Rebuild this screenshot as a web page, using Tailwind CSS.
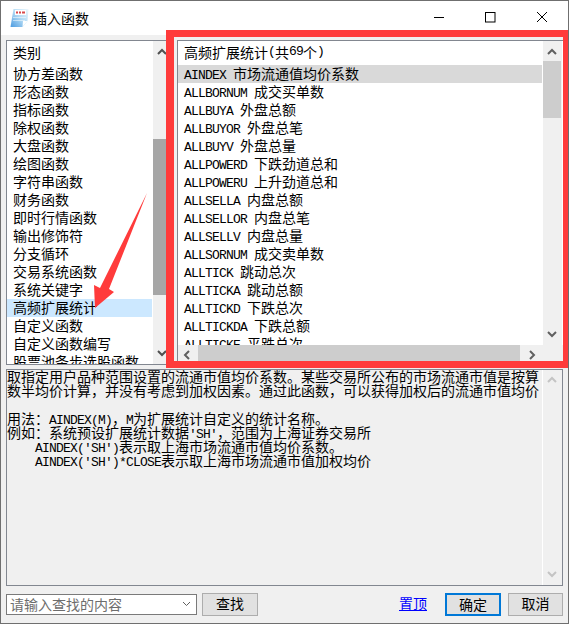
<!DOCTYPE html>
<html lang="zh">
<head>
<meta charset="utf-8">
<script src="https://cdn.jsdelivr.net/npm/@tailwindcss/browser@4"></script>
</head>
<body class="m-0">
<div class="relative w-[569px] h-[624px] overflow-hidden bg-[#f0f0f0] border border-[#6f6f6f] font-['Noto_Sans_CJK_SC','Liberation_Sans',sans-serif] text-[14px] leading-[18px] text-black">
  <!-- title bar -->
  <header class="h-[34px] bg-white flex items-center pl-[9px]">
    <svg class="w-[19px] h-[20px]" viewBox="0 0 19 20">
      <defs><linearGradient id="pg" x1="0" y1="1" x2="1" y2="0"><stop offset="0" stop-color="#4c9be0"/><stop offset="0.55" stop-color="#b5dcf5"/><stop offset="1" stop-color="#eef8fd"/></linearGradient></defs>
      <path d="M3.500 1H18.500L17.500 13L12.500 19H0.500Z" fill="url(#pg)"/>
      <rect x="5" y="2" width="11" height="5" fill="#fff"/>
      <path d="M6 4.500h2M9 4.500h2M12 4.500h3" stroke="#d8494b" stroke-width="2"/>
      <path d="M3 9.500H16M3 12.500H15" stroke="#fff" stroke-opacity="0.5"/>
      <path d="M12.500 19L17.500 13H13Z" fill="#fff"/>
    </svg>
    <h1 class="ml-[4px] text-[14px] font-normal">插入函数</h1>
    <div class="ml-auto flex items-center h-full">
      <svg class="w-[52px] h-[34px]" viewBox="0 0 52 34"><path d="M22 16.500h10" stroke="#000" fill="none"/></svg>
      <svg class="w-[52px] h-[34px]" viewBox="0 0 52 34"><rect x="21.500" y="11.500" width="9.500" height="9.500" stroke="#000" fill="none"/></svg>
      <svg class="w-[52px] h-[34px]" viewBox="0 0 52 34"><path d="M21 11l10 10M31 11l-10 10" stroke="#000" fill="none"/></svg>
    </div>
  </header>

  <main class="flex flex-col px-[5px]">
    <div class="flex gap-[6px] pt-[5px] h-[331px]">
      <!-- category list -->
      <section class="relative w-[165px] h-[325px] shrink-0 bg-white border border-[#828790] flex overflow-hidden">
        <div class="w-[145px] shrink-0">
          <div class="h-[22px] mb-[2px] pl-[6px] flex items-center">类别</div>
          <ul class="leading-[16px]">
            <li class="h-[18px] pl-[6px]">协方差函数</li>
            <li class="h-[18px] pl-[6px]">形态函数</li>
            <li class="h-[18px] pl-[6px]">指标函数</li>
            <li class="h-[18px] pl-[6px]">除权函数</li>
            <li class="h-[18px] pl-[6px]">大盘函数</li>
            <li class="h-[18px] pl-[6px]">绘图函数</li>
            <li class="h-[18px] pl-[6px]">字符串函数</li>
            <li class="h-[18px] pl-[6px]">财务函数</li>
            <li class="h-[18px] pl-[6px]">即时行情函数</li>
            <li class="h-[18px] pl-[6px]">输出修饰符</li>
            <li class="h-[18px] pl-[6px]">分支循环</li>
            <li class="h-[18px] pl-[6px]">交易系统函数</li>
            <li class="h-[18px] pl-[6px]">系统关键字</li>
            <li class="h-[18px] pl-[6px] bg-[#cce8ff]">高频扩展统计</li>
            <li class="h-[18px] pl-[6px]">自定义函数</li>
            <li class="h-[18px] pl-[6px]">自定义函数编写</li>
            <li class="h-[18px] pl-[6px] whitespace-nowrap">股票池条步选股函数</li>
          </ul>
        </div>
        <div class="relative w-[18px] ml-[1px] h-full bg-[#f0f0f0]">
          <svg class="absolute left-[3px] top-[7px] w-[12px] h-[8px]" viewBox="0 0 12 8"><path d="M2 6l4-4 4 4" stroke="#505050" stroke-width="2" fill="none"/></svg>
          <div class="absolute left-0 top-[98px] w-full h-[156px] bg-[#a6a6a6]"></div>
          <svg class="absolute left-[3px] bottom-[7px] w-[12px] h-[8px]" viewBox="0 0 12 8"><path d="M2 2l4 4 4-4" stroke="#505050" stroke-width="2" fill="none"/></svg>
        </div>
      </section>

      <!-- function list -->
      <section class="relative w-[387px] h-[322px] shrink-0 bg-white border border-[#828790] flex flex-col overflow-hidden">
        <div class="flex h-[304px]">
          <div class="w-[365px] shrink-0 overflow-hidden">
            <div class="h-[22px] mb-[2px] pl-[6px] flex items-center whitespace-pre">高频扩展统计<span class="font-['Liberation_Mono'] text-[13px] tracking-[-0.8px]">(</span>共<span class="font-['Liberation_Mono'] text-[13px] tracking-[-0.8px]">69</span>个<span class="font-['Liberation_Mono'] text-[13px] tracking-[-0.8px]">)</span></div>
            <ul class="w-[364px] whitespace-nowrap leading-[16px]">
              <li class="h-[18px] pl-[6px] bg-[#d9d9d9]"><span class="font-['Liberation_Mono'] text-[13px] tracking-[-0.8px]">AINDEX </span>市场流通值均价系数</li>
              <li class="h-[18px] pl-[6px]"><span class="font-['Liberation_Mono'] text-[13px] tracking-[-0.8px]">ALLBORNUM </span>成交买单数</li>
              <li class="h-[18px] pl-[6px]"><span class="font-['Liberation_Mono'] text-[13px] tracking-[-0.8px]">ALLBUYA </span>外盘总额</li>
              <li class="h-[18px] pl-[6px]"><span class="font-['Liberation_Mono'] text-[13px] tracking-[-0.8px]">ALLBUYOR </span>外盘总笔</li>
              <li class="h-[18px] pl-[6px]"><span class="font-['Liberation_Mono'] text-[13px] tracking-[-0.8px]">ALLBUYV </span>外盘总量</li>
              <li class="h-[18px] pl-[6px]"><span class="font-['Liberation_Mono'] text-[13px] tracking-[-0.8px]">ALLPOWERD </span>下跌劲道总和</li>
              <li class="h-[18px] pl-[6px]"><span class="font-['Liberation_Mono'] text-[13px] tracking-[-0.8px]">ALLPOWERU </span>上升劲道总和</li>
              <li class="h-[18px] pl-[6px]"><span class="font-['Liberation_Mono'] text-[13px] tracking-[-0.8px]">ALLSELLA </span>内盘总额</li>
              <li class="h-[18px] pl-[6px]"><span class="font-['Liberation_Mono'] text-[13px] tracking-[-0.8px]">ALLSELLOR </span>内盘总笔</li>
              <li class="h-[18px] pl-[6px]"><span class="font-['Liberation_Mono'] text-[13px] tracking-[-0.8px]">ALLSELLV </span>内盘总量</li>
              <li class="h-[18px] pl-[6px]"><span class="font-['Liberation_Mono'] text-[13px] tracking-[-0.8px]">ALLSORNUM </span>成交卖单数</li>
              <li class="h-[18px] pl-[6px]"><span class="font-['Liberation_Mono'] text-[13px] tracking-[-0.8px]">ALLTICK </span>跳动总次</li>
              <li class="h-[18px] pl-[6px]"><span class="font-['Liberation_Mono'] text-[13px] tracking-[-0.8px]">ALLTICKA </span>跳动总额</li>
              <li class="h-[18px] pl-[6px]"><span class="font-['Liberation_Mono'] text-[13px] tracking-[-0.8px]">ALLTICKD </span>下跌总次</li>
              <li class="h-[18px] pl-[6px]"><span class="font-['Liberation_Mono'] text-[13px] tracking-[-0.8px]">ALLTICKDA </span>下跌总额</li>
              <li class="h-[18px] pl-[6px]"><span class="font-['Liberation_Mono'] text-[13px] tracking-[-0.8px]">ALLTICKE </span>平跌总次</li>
            </ul>
          </div>
          <div class="relative w-[19px] h-full bg-[#f0f0f0]">
            <svg class="absolute left-[3px] top-[7px] w-[12px] h-[8px]" viewBox="0 0 12 8"><path d="M2 6l4-4 4 4" stroke="#606060" stroke-width="2" fill="none"/></svg>
            <div class="absolute left-0 top-[20px] w-[18px] h-[57px] bg-[#cdcdcd]"></div>
            <svg class="absolute left-[3px] bottom-[7px] w-[12px] h-[8px]" viewBox="0 0 12 8"><path d="M2 2l4 4 4-4" stroke="#606060" stroke-width="2" fill="none"/></svg>
          </div>
        </div>
        <div class="relative flex-1 bg-[#f0f0f0]">
          <svg class="absolute left-[5px] top-[4px] w-[8px] h-[12px]" viewBox="0 0 8 12"><path d="M6 2l-4 4 4 4" stroke="#606060" stroke-width="2" fill="none"/></svg>
          <div class="absolute left-[20px] top-0 w-[322px] h-full bg-[#cdcdcd]"></div>
          <svg class="absolute left-[350px] top-[4px] w-[8px] h-[12px]" viewBox="0 0 8 12"><path d="M2 2l4 4-4 4" stroke="#606060" stroke-width="2" fill="none"/></svg>
        </div>
      </section>
    </div>

    <!-- description -->
    <section class="flex h-[217px] border border-[#828790] mt-[3px]">
      <div class="w-[535px] shrink-0 overflow-hidden whitespace-nowrap leading-[14px] -mt-[1px]">
        <p class="h-[14px]">取指定用户品种范围设置的流通市值均价系数。某些交易所公布的市场流通市值是按算</p>
        <p class="h-[14px]">数半均价计算，并没有考虑到加权因素。通过此函数，可以获得加权后的流通市值均价</p>
        <p class="h-[14px]"></p>
        <p class="h-[14px]">用法：<span class="font-['Liberation_Mono'] text-[13px] tracking-[-0.8px]">AINDEX(M)</span>，<span class="font-['Liberation_Mono'] text-[13px] tracking-[-0.8px]">M</span>为扩展统计自定义的统计名称。</p>
        <p class="h-[14px]">例如：系统预设扩展统计数据<span class="font-['Liberation_Mono'] text-[13px] tracking-[-0.8px]">'SH'</span>，范围为上海证券交易所</p>
        <p class="h-[14px] pl-[28px]"><span class="font-['Liberation_Mono'] text-[13px] tracking-[-0.8px]">AINDEX('SH')</span>表示取上海市场流通市值均价系数。</p>
        <p class="h-[14px] pl-[28px]"><span class="font-['Liberation_Mono'] text-[13px] tracking-[-0.8px]">AINDEX('SH')*CLOSE</span>表示取上海市场流通市值加权均价</p>
      </div>
      <div class="relative w-[20px] h-full bg-[#f0f0f0] border-l border-white">
        <svg class="absolute left-[3px] top-[6px] w-[12px] h-[8px]" viewBox="0 0 12 8"><path d="M2 6l4-4 4 4" stroke="#c4c4c4" stroke-width="2" fill="none"/></svg>
        <svg class="absolute left-[3px] bottom-[7px] w-[12px] h-[8px]" viewBox="0 0 12 8"><path d="M2 2l4 4 4-4" stroke="#c4c4c4" stroke-width="2" fill="none"/></svg>
      </div>
    </section>

    <!-- footer -->
    <footer class="flex items-center mt-[7px] h-[23px] whitespace-nowrap">
      <div class="w-[191px] h-[21px] shrink-0 bg-white border border-[#7a7a7a] flex items-center pl-[3px] pb-[2px] text-[#6d6d6d]">
        <span>请输入查找的内容</span>
        <svg class="ml-auto mr-[5px] w-[9px] h-[6px]" viewBox="0 0 9 6"><path d="M1 1l3.500 3.500L8 1" stroke="#606060" fill="none"/></svg>
      </div>
      <button class="ml-[5px] w-[56px] h-[23px] shrink-0 pb-[3px] bg-[#e1e1e1] border border-[#adadad] text-[14px]">查找</button>
      <a class="ml-[141px] w-[28px] shrink-0 pb-[3px] text-[#0000ff] underline">置顶</a>
      <button class="ml-[18px] w-[56px] h-[23px] shrink-0 pb-[3px] bg-[#e1e1e1] border-2 border-[#0078d7] text-[14px]">确定</button>
      <button class="ml-[7px] w-[55px] h-[23px] shrink-0 pb-[3px] bg-[#e1e1e1] border border-[#adadad] text-[14px]">取消</button>
    </footer>
  </main>

  <!-- red annotation rectangle -->
  <div class="absolute left-[165px] top-[29px] w-[403px] h-[338px] border-t-[7px] border-b-[7px] border-l-[8px] border-r-[6px] border-[#ff3b3b] pointer-events-none"></div>
  <!-- red annotation arrow (svg origin is the window's inner corner) -->
  <svg class="absolute left-0 top-0 w-[567px] h-[622px] pointer-events-none" viewBox="1 1 567 622"><path d="M147 193L109 289L114 292L95 308L94 285L100 288Z" fill="#ff3b3b"/></svg>
</div>
</body>
</html>
